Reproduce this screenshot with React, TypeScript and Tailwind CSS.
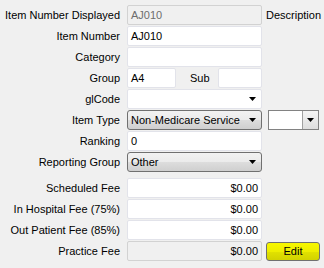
const Arrow = () => (
  <svg width="7" height="4" viewBox="0 0 7 4" className="shrink-0">
    <path d="M0 0h7L3.5 4z" fill="#000" />
  </svg>
);

const Label = ({ text }: { text: string }) => (
  <div className="w-[121px] shrink-0 pr-[1px] text-right whitespace-nowrap text-black">{text}</div>
);

const TextBox = ({ value = '', w = 'w-[135px]', right = false, disabled = false, grey = false }: { value?: string; w?: string; right?: boolean; disabled?: boolean; grey?: boolean }) => (
  <div
    className={`${w} h-[20px] ml-[6px] shrink-0 flex items-center px-[3px] rounded-[2px] border whitespace-nowrap ${
      disabled ? 'bg-[#f0f0f0] border-[#d2d2d2]' : 'bg-white border-[#e2e3ea]'
    } ${grey ? 'text-[#6d6d6d]' : 'text-black'} ${right ? 'justify-end' : ''}`}
  >
    {value}
  </div>
);

const DropList = ({ value }: { value: string }) => (
  <div className="w-[135px] h-[20px] ml-[6px] shrink-0 flex items-center justify-between pl-[3px] pr-[5px] rounded-[3px] border border-[#707070] whitespace-nowrap bg-[linear-gradient(#f2f2f2_0%,#ebebeb_50%,#dddddd_50%,#cfcfcf_100%)]">
    <span>{value}</span>
    <Arrow />
  </div>
);

const Row = ({ children, className = '' }: { children: React.ReactNode; className?: string }) => (
  <div className={`flex items-center h-[20px] ${className}`}>{children}</div>
);

export default function App() {
  return (
    <div className="w-[324px] h-[268px] overflow-hidden bg-[#f0f0f0] text-[11px] leading-none text-black font-['Liberation_Sans',Arial,sans-serif]">
      <div className="flex flex-col gap-[1px] pt-[5px]">
        <Row>
          <Label text="Item Number Displayed" />
          <TextBox value="AJ010" disabled grey />
          <span className="ml-[4px] whitespace-nowrap">Description</span>
        </Row>
        <Row>
          <Label text="Item Number" />
          <TextBox value="AJ010" />
        </Row>
        <Row>
          <Label text="Category" />
          <TextBox />
        </Row>
        <Row>
          <Label text="Group" />
          <TextBox value="A4" w="w-[49px]" />
          <span className="ml-[14px] w-[22px]">Sub</span>
          <TextBox w="w-[44px]" />
        </Row>
        <Row>
          <Label text="glCode" />
          <div className="w-[135px] h-[20px] ml-[6px] flex items-center justify-end pr-[5px] rounded-[2px] border border-[#e2e3ea] bg-white">
            <Arrow />
          </div>
        </Row>
        <Row>
          <Label text="Item Type" />
          <DropList value="Non-Medicare Service" />
          <div className="w-[51px] h-[20px] ml-[6px] shrink-0 flex border border-[#828282] bg-white">
            <div className="flex-1" />
            <div className="w-[16px] flex items-center justify-center border-l border-[#a0a0a0] bg-[linear-gradient(#f4f4f4,#dedede)]">
              <Arrow />
            </div>
          </div>
        </Row>
        <Row>
          <Label text="Ranking" />
          <TextBox value="0" />
        </Row>
        <Row>
          <Label text="Reporting Group" />
          <DropList value="Other" />
        </Row>
        <Row className="mt-[5px]">
          <Label text="Scheduled Fee" />
          <TextBox value="$0.00" right />
        </Row>
        <Row>
          <Label text="In Hospital Fee (75%)" />
          <TextBox value="$0.00" right />
        </Row>
        <Row>
          <Label text="Out Patient Fee (85%)" />
          <TextBox value="$0.00" right />
        </Row>
        <Row>
          <Label text="Practice Fee" />
          <TextBox value="$0.00" right disabled />
          <button className="ml-[4px] w-[54px] h-[19px] shrink-0 flex items-center justify-center rounded-[3px] border border-[#707070] bg-[linear-gradient(#f7f700_0%,#eeee00_50%,#e2e200_50%,#d2d200_100%)] text-black">
            Edit
          </button>
        </Row>
      </div>
    </div>
  );
}
